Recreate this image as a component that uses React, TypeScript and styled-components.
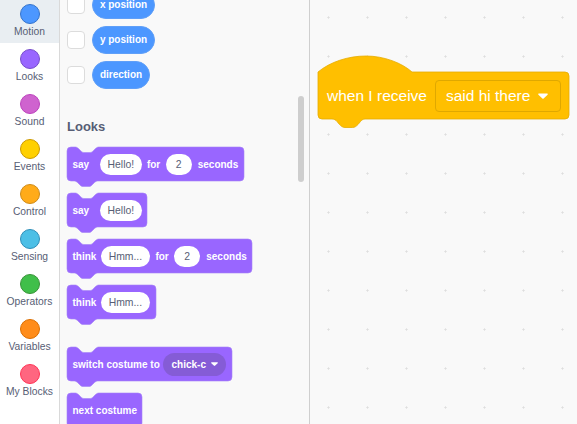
import React, { FC } from 'react';
import styled, { createGlobalStyle } from 'styled-components';

const GlobalStyle = createGlobalStyle`
    html, body {
        margin: 0;
        padding: 0;
        background: #f9f9f9;
        font-family: "Liberation Sans", Arial, sans-serif;
    }
`;

const categories = [
    { name: 'Motion', fill: '#4c97ff', edge: '#3373cc' },
    { name: 'Looks', fill: '#9966ff', edge: '#774dcb' },
    { name: 'Sound', fill: '#cf63cf', edge: '#bd42bd' },
    { name: 'Events', fill: '#ffd000', edge: '#cc9900' },
    { name: 'Control', fill: '#ffab19', edge: '#cf8b17' },
    { name: 'Sensing', fill: '#4cbfe6', edge: '#2e8eb8' },
    { name: 'Operators', fill: '#40bf4a', edge: '#389438' },
    { name: 'Variables', fill: '#ff8c1a', edge: '#db6e00' },
    { name: 'My Blocks', fill: '#ff6680', edge: '#ff3355' },
];

const Page = styled.div`
    display: flex;
    width: 577px;
    height: 424px;
    overflow: hidden;
`;

const Sidebar = styled.nav`
    flex: none;
    box-sizing: border-box;
    width: 60px;
    height: 426px;
    margin-top: -2px;
    background: #fff;
    border-right: 1px solid #d9d9d9;
`;

const Category = styled.div<{ $active?: boolean }>`
    display: flex;
    flex-direction: column;
    align-items: center;
    box-sizing: border-box;
    height: 45px;
    padding-top: 6px;
    background: ${(props) => (props.$active ? '#e9eef2' : 'transparent')};
`;

const Dot = styled.span<{ $fill: string; $edge: string }>`
    box-sizing: border-box;
    width: 20px;
    height: 20px;
    border-radius: 50%;
    background: ${(props) => props.$fill};
    border: 1px solid ${(props) => props.$edge};
`;

const CategoryName = styled.span`
    margin-top: 2px;
    font-size: 10.3px;
    line-height: 12px;
    color: #575e75;
    white-space: nowrap;
`;

const Palette = styled.section`
    flex: none;
    position: relative;
    box-sizing: border-box;
    width: 250px;
    height: 424px;
    overflow: hidden;
    padding: 0 0 0 7px;
    background: #f9f9f9;
    border-right: 1px solid #cfcfcf;
`;

const ScrollThumb = styled.div`
    position: absolute;
    left: 238px;
    top: 96px;
    width: 6px;
    height: 86px;
    border-radius: 3px;
    background: #cecece;
`;

const ReporterList = styled.div`
    display: flex;
    flex-direction: column;
    gap: 7px;
    margin-top: -9px;
`;

const ReporterRow = styled.div`
    display: flex;
    align-items: center;
    gap: 7px;
`;

const Checkbox = styled.span`
    box-sizing: border-box;
    width: 18px;
    height: 18px;
    border-radius: 4px;
    background: #fff;
    border: 1px solid #dcdcdc;
`;

const Reporter = styled.span<{ $width: number }>`
    box-sizing: border-box;
    width: ${(props) => props.$width}px;
    height: 28px;
    border-radius: 14px;
    background: #4c97ff;
    border: 1px solid #5f9ff8;
    color: #fff;
    font-size: 10px;
    font-weight: 700;
    line-height: 26px;
    text-align: center;
    white-space: nowrap;
`;

const Heading = styled.h2`
    margin: 30px 0 12px;
    font-size: 13px;
    line-height: 16px;
    font-weight: 700;
    color: #575e75;
`;

const BlockList = styled.div`
    display: flex;
    flex-direction: column;
`;

const StackBlock = styled.div<{ $width: number; $spaced?: boolean }>`
    position: relative;
    display: flex;
    align-items: center;
    box-sizing: border-box;
    flex: none;
    width: ${(props) => props.$width}px;
    height: 34px;
    margin-top: ${(props) => (props.$spaced ? '28px' : '12px')};
    padding: 0 5.5px;
    color: #fff;
    font-size: 10px;
    font-weight: 700;
    white-space: nowrap;

    &:first-child {
        margin-top: 0;
    }
`;

const BlockShape = styled.svg`
    position: absolute;
    left: 0;
    top: 0;
    overflow: visible;
`;

const HatShape = styled(BlockShape)`
    top: -16px;
`;

const Label = styled.span<{ $gap?: number }>`
    position: relative;
    margin-left: ${(props) => props.$gap ?? 0}px;
`;

const Field = styled.span<{ $width: number; $gap: number }>`
    position: relative;
    flex: none;
    width: ${(props) => props.$width}px;
    margin-left: ${(props) => props.$gap}px;
    height: 21px;
    border-radius: 11px;
    background: #fff;
    color: #575e75;
    font-size: 10.4px;
    font-weight: 400;
    line-height: 21px;
    text-align: center;
`;

const Menu = styled.span`
    position: relative;
    display: flex;
    align-items: center;
    justify-content: center;
    gap: 5px;
    flex: none;
    width: 63px;
    height: 23px;
    margin-left: 3.500px;
    border-radius: 12px;
    background: #855cd6;
`;

const Workspace = styled.main`
    flex: 1;
    position: relative;
    background-color: #f9f9f9;
    background-image: radial-gradient(circle at center, #dedede 0.9px, transparent 1.2px);
    background-size: 39px 39px;
    background-position: -1px -2px;
`;

const HatBlock = styled.div`
    position: absolute;
    left: 8px;
    top: 72px;
    display: flex;
    align-items: center;
    box-sizing: border-box;
    width: 251px;
    height: 47px;
    padding: 0 8px 0 9px;
    color: #fff;
    font-size: 15.5px;
    white-space: nowrap;
`;

const HatMenu = styled.span`
    position: relative;
    display: flex;
    align-items: center;
    justify-content: space-between;
    box-sizing: border-box;
    flex: none;
    width: 126px;
    height: 32px;
    margin-left: 8px;
    padding: 0 12px 0 10px;
    border: 1px solid #dfa800;
    border-radius: 4px;
    background: #ffbf00;
`;

const notch = 'c1.5 0 2.5 .7 3.5 1.5l2.2 2.2c.9 .9 1.8 1.8 3.3 1.8h6c1.5 0 2.4-.9 3.3-1.8l2.2-2.2c1-.8 2-1.5 3.5-1.5';
const tab = 'c-1.5 0-2.5 .7-3.5 1.5l-2.2 2.2c-.9 .9-1.8 1.8-3.3 1.8h-6c-1.5 0-2.4-.9-3.3-1.8l-2.2-2.2c-1-.8-2-1.5-3.5-1.5';

const blockPath = (w: number) =>
    `M0 4a4 4 0 0 1 4-4H8${notch}H${w - 4}a4 4 0 0 1 4 4V30a4 4 0 0 1-4 4H31${tab}H4a4 4 0 0 1-4-4Z`;

const Shape: FC<{ width: number }> = ({ width }) => (
    <BlockShape width={width} height={40} viewBox={`0 0 ${width} 40`}>
        <path d={blockPath(width)} fill="#9966ff" stroke="#a583f5" strokeWidth={0.6} />
    </BlockShape>
);

const Arrow: FC<{ size: number }> = ({ size }) => (
    <svg width={size} height={size * 0.6} viewBox="0 0 10 6">
        <path d="M1 0.5h8c.7 0 1 .7.6 1.2L5.6 5.4c-.3.3-.9.3-1.2 0L.4 1.7C0 1.2.3.5 1 .5Z" fill="#fff" />
    </svg>
);

const App: FC = () => (
    <>
        <GlobalStyle />
        <Page>
            <Sidebar>
                {categories.map((c, index) => (
                    <Category key={c.name} $active={index === 0}>
                        <Dot $fill={c.fill} $edge={c.edge} />
                        <CategoryName>{c.name}</CategoryName>
                    </Category>
                ))}
            </Sidebar>
            <Palette>
                <ReporterList>
                    <ReporterRow>
                        <Checkbox />
                        <Reporter $width={63}>x position</Reporter>
                    </ReporterRow>
                    <ReporterRow>
                        <Checkbox />
                        <Reporter $width={63}>y position</Reporter>
                    </ReporterRow>
                    <ReporterRow>
                        <Checkbox />
                        <Reporter $width={58}>direction</Reporter>
                    </ReporterRow>
                </ReporterList>
                <Heading>Looks</Heading>
                <BlockList>
                    <StackBlock $width={177}>
                        <Shape width={177} />
                        <Label>say</Label>
                        <Field $width={42} $gap={10.7}>Hello!</Field>
                        <Label $gap={5}>for</Label>
                        <Field $width={26} $gap={5.5}>2</Field>
                        <Label $gap={6}>seconds</Label>
                    </StackBlock>
                    <StackBlock $width={80}>
                        <Shape width={80} />
                        <Label>say</Label>
                        <Field $width={42} $gap={10.7}>Hello!</Field>
                    </StackBlock>
                    <StackBlock $width={185}>
                        <Shape width={185} />
                        <Label>think</Label>
                        <Field $width={49} $gap={4.5}>Hmm...</Field>
                        <Label $gap={5.5}>for</Label>
                        <Field $width={26} $gap={5.5}>2</Field>
                        <Label $gap={6}>seconds</Label>
                    </StackBlock>
                    <StackBlock $width={89}>
                        <Shape width={89} />
                        <Label>think</Label>
                        <Field $width={49} $gap={4.5}>Hmm...</Field>
                    </StackBlock>
                    <StackBlock $width={165} $spaced>
                        <Shape width={165} />
                        <Label>switch costume to</Label>
                        <Menu>
                            chick-c
                            <Arrow size={7} />
                        </Menu>
                    </StackBlock>
                    <StackBlock $width={75}>
                        <Shape width={75} />
                        <Label>next costume</Label>
                    </StackBlock>
                </BlockList>
                <ScrollThumb />
            </Palette>
            <Workspace>
                <HatBlock>
                    <HatShape width={251} height={72} viewBox="0 -16 251 72">
                        <path
                            d="M0 0C12 -10 30 -16 48 -16C66 -16 84 -9 94 0H247a4 4 0 0 1 4 4V43a4 4 0 0 1-4 4H47c-2 0-3 1-4.500 2.500l-2.500 3c-1.500 1.500-3 3-5.500 3H27c-2.500 0-4-1.500-5.500-3l-2.500-3C18 48 16 47 14 47H4a4 4 0 0 1-4-4Z"
                            fill="#ffbf00"
                            stroke="#e6ac00"
                            strokeWidth={0.8}
                        />
                    </HatShape>
                    <Label>when I receive</Label>
                    <HatMenu>
                        said hi there
                        <Arrow size={10} />
                    </HatMenu>
                </HatBlock>
            </Workspace>
        </Page>
    </>
);

export default App;
